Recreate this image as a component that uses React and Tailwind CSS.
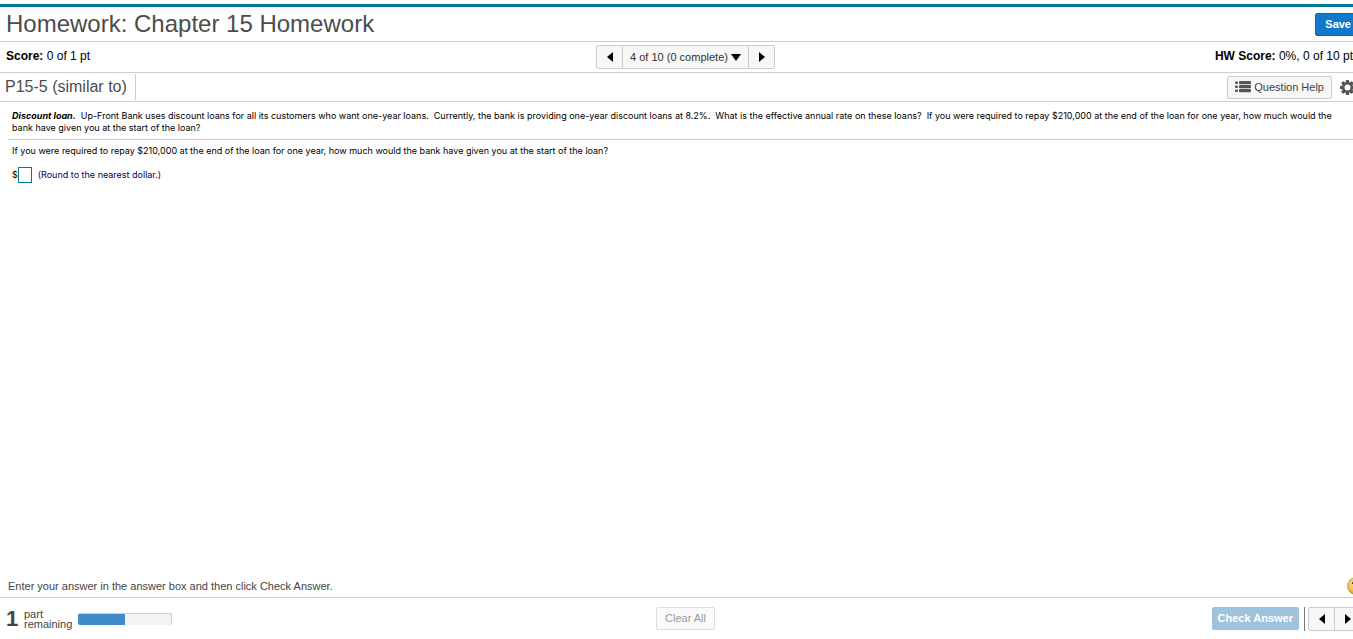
function Triangle({ direction }) {
  const points = {
    left: "7,0 7,10 1,5",
    right: "1,0 1,10 7,5",
  };
  return (
    <svg width="8" height="10" viewBox="0 0 8 10" aria-hidden="true">
      <polygon points={points[direction]} fill="#000" />
    </svg>
  );
}

function ListIcon() {
  return (
    <svg width="16" height="12" viewBox="0 0 16 12" fill="#555" aria-hidden="true">
      {[0, 4, 8].map((y) => (
        <g key={y}>
          <rect x="0" y={y + 0.5} width="3" height="2.6" rx="1" />
          <rect x="4" y={y} width="12" height="3.2" rx="1" />
        </g>
      ))}
    </svg>
  );
}

function GearIcon() {
  return (
    <svg width="15" height="15" viewBox="0 0 15 15" aria-hidden="true">
      <g fill="#555">
        {[0, 45, 90, 135].map((a) => (
          <rect key={a} x="5.8" y="0" width="3.4" height="15" rx="0.8" transform={`rotate(${a} 7.5 7.5)`} />
        ))}
        <circle cx="7.5" cy="7.5" r="5.4" />
      </g>
      <circle cx="7.5" cy="7.5" r="3" fill="#fff" />
    </svg>
  );
}

function HelpBall() {
  return (
    <svg width="18" height="18" viewBox="0 0 18 18" aria-hidden="true">
      <defs>
        <radialGradient id="ball" cx="0.45" cy="0.35" r="0.65">
          <stop offset="0" stopColor="#ffe08a" />
          <stop offset="0.7" stopColor="#f5bd45" />
          <stop offset="1" stopColor="#c58f2c" />
        </radialGradient>
      </defs>
      <circle cx="9" cy="9" r="8.5" fill="url(#ball)" stroke="#b99a5a" strokeWidth="0.8" />
      <path d="M5.8 7 Q6 4.4 9 4.4 Q12 4.4 12 7 Q12 8.6 9.2 9.6 V11" fill="none" stroke="#3d3520" strokeWidth="1.8" />
      <circle cx="9.2" cy="13.4" r="1.1" fill="#3d3520" />
    </svg>
  );
}

const navButton =
  "flex h-6 items-center justify-center border border-[#ccc] bg-[#f7f7f7]";

export default function App() {
  return (
    <div className="overflow-x-hidden bg-white font-['Liberation_Sans',Arial,sans-serif] text-black">
      <div className="-mr-3 flex min-h-screen flex-col pt-1">
        <header className="flex h-[38px] items-center justify-between border-t-[3px] border-b border-t-[#007a9c] border-b-[#c8cbdb] pr-1 pl-1.5">
          <h1 className="text-[24px] leading-8 text-[#4c4c4c]">Homework: Chapter 15 Homework</h1>
          <button className="h-[23px] rounded-xs border border-[#0b6ab8] bg-[#1079cc] px-[9px] text-[11px] font-bold text-white">
            Save
          </button>
        </header>

        <section className="grid h-[31px] grid-cols-[1fr_auto_1fr] items-center border-b border-[#c8cbdb] pl-1.5 text-[12px]">
          <p className="pb-0.5">
            <b>Score:</b> 0 of 1 pt
          </p>
          <nav aria-label="Questions" className="flex">
            <button aria-label="Previous question" className={`${navButton} w-[27px] rounded-l-xs`}>
              <Triangle direction="left" />
            </button>
            <button className={`${navButton} -ml-px w-[127px] gap-[3px] text-[11px] text-[#333]`}>
              4 of 10 (0 complete)
              <svg width="10" height="7" viewBox="0 0 10 7" aria-hidden="true">
                <polygon points="0,0 10,0 5,7" fill="#000" />
              </svg>
            </button>
            <button aria-label="Next question" className={`${navButton} -ml-px w-[27px] rounded-r-xs`}>
              <Triangle direction="right" />
            </button>
          </nav>
          <p className="justify-self-end pr-1.5 pb-0.5 whitespace-nowrap">
            <b>HW Score:</b> 0%, 0 of 10 pts
          </p>
        </section>

        <section className="flex h-[29px] items-center justify-between border-b border-[#c8cbdb] pr-2.5 pl-[5px]">
          <h2 className="h-[26px] border-r border-[#c8cbdb] pr-2 text-[16px] leading-[26px] text-[#4c4c4c]">
            P15-5 (similar to)
          </h2>
          <div className="flex items-center gap-2">
            <button className="flex h-[23px] items-center gap-[3px] rounded-xs border border-[#ccc] bg-[#f7f7f7] px-[7px] text-[11px] text-[#444]">
              <ListIcon />
              Question Help
            </button>
            <button aria-label="Settings">
              <GearIcon />
            </button>
          </div>
        </section>

        <main className="flex-1 pl-2 font-[Inter,sans-serif] text-[9px] leading-3">
          <p className="border-b border-[#c8cbdb] pt-2 pb-[5px] pl-1">
            <b className="italic">Discount loan.</b>&nbsp; Up-Front Bank uses discount loans for all its customers who
            want one-year loans.&nbsp; Currently, the bank is providing one-year discount loans at 8.2%.&nbsp; What is
            the effective annual rate on these loans?&nbsp; If you were required to repay $210,000 at the end of the
            loan for one year, how much would the
            <br />
            bank have given you at the start of the loan?
          </p>
          <p className="pt-[5px] pl-1">
            If you were required to repay $210,000 at the end of the loan for one year, how much would the bank have
            given you at the start of the loan?
          </p>
          <label className="flex items-center pt-2.5 pl-1">
            $
            <input
              aria-label="Loan amount in dollars"
              className="h-4 w-3.5 border border-[#007a9c] bg-white"
            />
            <span className="pl-1.5 text-[#000066]">(Round to the nearest dollar.)</span>
          </label>
        </main>

        <div className="flex items-center justify-between pb-0.5 pl-2 text-[11px] leading-4 text-[#444]">
          <p>Enter your answer in the answer box and then click Check Answer.</p>
          <button aria-label="Help">
            <HelpBall />
          </button>
        </div>

        <footer className="grid h-[42px] grid-cols-[1fr_auto_1fr] items-center border-t border-[#c8cbdb] pl-1.5 text-[11px] text-[#444]">
          <div className="flex items-center">
            <span className="w-[18px] text-[22px] leading-6 font-bold">1</span>
            <span className="w-[54px] leading-[10px]">
              part
              <br />
              remaining
            </span>
            <div
              role="progressbar"
              aria-label="Parts completed"
              aria-valuenow={50}
              className="h-3 w-[94px] overflow-hidden rounded-xs border-t border-r border-[#ccc] bg-[#f4f4f4]"
            >
              <div className="h-full w-1/2 bg-[#428bca]" />
            </div>
          </div>
          <button disabled className="h-[23px] rounded-xs border border-[#ddd] bg-[#fafafa] px-2 text-[#999]">
            Clear All
          </button>
          <div className="flex items-center justify-self-end pr-1">
            <button disabled className="h-[23px] rounded-xs bg-[#9fc2de] px-1.5 font-bold whitespace-nowrap text-white">
              Check Answer
            </button>
            <div className="ml-[5px] h-6 border-l border-[#777] pl-[3px]">
              <div className="flex">
                <button aria-label="Previous part" className={`${navButton} w-[27px] rounded-l-xs`}>
                  <Triangle direction="left" />
                </button>
                <button aria-label="Next part" className={`${navButton} -ml-px w-[27px] rounded-r-xs`}>
                  <Triangle direction="right" />
                </button>
              </div>
            </div>
          </div>
        </footer>
      </div>
    </div>
  );
}
